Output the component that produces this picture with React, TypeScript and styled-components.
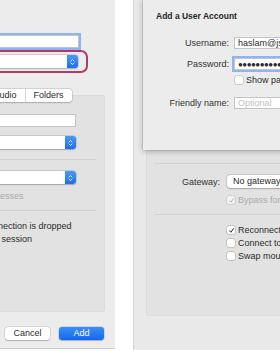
import styled, { createGlobalStyle } from 'styled-components';

const GlobalStyle = createGlobalStyle`
  html, body {
    margin: 0;
    padding: 0;
    background: #ffffff;
  }
  body {
    font-family: 'Liberation Sans', Arial, sans-serif;
    font-size: 9px;
    color: #2b2b2b;
  }
  * {
    box-sizing: border-box;
  }
`;

const Page = styled.div`
  display: flex;
  width: 280px;
  height: 351px;
  overflow: hidden;
  background: #ffffff;
`;

const LeftWindow = styled.div`
  flex-shrink: 0;
  display: flex;
  justify-content: flex-end;
  width: 115px;
  height: 349px;
  overflow: hidden;
  background: #ececec;
  border-bottom: 1px solid #c9c9c9;
`;

const WindowGap = styled.div`
  flex-shrink: 0;
  width: 18px;
`;

const RightWindow = styled.div`
  position: relative;
  flex-shrink: 0;
  display: flex;
  width: 147px;
  height: 350px;
  overflow: hidden;
  background: #e9e9e9;
  border-left: 1px solid #d4d4d4;
`;

const Dialog = styled.div<{ $shift: number }>`
  flex-shrink: 0;
  display: flex;
  flex-direction: column;
  width: 303px;
  padding-top: ${({ $shift }) => 35 + $shift}px;
`;

// the part of the dialog that a sheet may cover
const CoveredPart = styled.div<{ $covered: boolean }>`
  display: flex;
  flex-direction: column;
  visibility: ${({ $covered }) => ($covered ? 'hidden' : 'visible')};
`;

const Row = styled.div<{ $gap?: number }>`
  display: flex;
  align-items: center;
  margin-top: ${({ $gap }) => $gap ?? 0}px;
`;

const Label = styled.div<{ $width: number }>`
  flex-shrink: 0;
  width: ${({ $width }) => $width}px;
  margin-right: 7px;
  text-align: right;
  white-space: nowrap;
  color: #333333;
`;

const TextField = styled.div<{ $width: number; $focused?: boolean; $height?: number }>`
  flex-shrink: 0;
  width: ${({ $width }) => $width}px;
  height: ${({ $height }) => $height ?? 13}px;
  padding: 0 3px;
  display: flex;
  align-items: center;
  white-space: nowrap;
  overflow: hidden;
  background: #ffffff;
  border: 0.5px solid #c4c4c4;
  box-shadow: ${({ $focused }) => ($focused ? '0 0 0 2px #8fb4f3' : 'none')};
  color: #2b2b2b;
`;

const Placeholder = styled.span`
  color: #c2c2c2;
`;

const Dots = styled.span`
  letter-spacing: -0.5px;
  font-size: 8px;
`;

const Popup = styled.div<{ $width: number }>`
  flex-shrink: 0;
  display: flex;
  width: ${({ $width }) => $width}px;
  height: 13px;
  background: #ffffff;
  border-radius: 3px;
  box-shadow: 0 0 0 0.5px rgba(0, 0, 0, 0.18), 0 0.5px 1.5px rgba(0, 0, 0, 0.2);
  overflow: hidden;
`;

const PopupText = styled.div`
  flex: 1;
  padding-left: 6px;
  line-height: 13px;
  white-space: nowrap;
  overflow: hidden;
`;

const Stepper = styled.div`
  flex-shrink: 0;
  display: flex;
  align-items: center;
  justify-content: center;
  width: 11px;
  background: linear-gradient(#4c99fb, #1a6ef2);
`;

const Highlight = styled.div<{ $show: boolean }>`
  display: flex;
  align-items: center;
  justify-content: flex-end;
  margin-top: 2px;
  margin-right: 27px;
  padding: 3px 8px 3px 0;
  border: 2px solid ${({ $show }) => ($show ? '#b23a68' : 'transparent')};
  border-radius: 7px;
`;

const TabBar = styled.div<{ $covered: boolean }>`
  position: relative;
  z-index: 1;
  display: flex;
  align-self: center;
  margin-top: 16px;
  margin-right: 8px;
  height: 13px;
  visibility: ${({ $covered }) => ($covered ? 'hidden' : 'visible')};
  background: #ffffff;
  border-radius: 3px;
  box-shadow: 0 0 0 0.5px rgba(0, 0, 0, 0.16), 0 0.5px 1.5px rgba(0, 0, 0, 0.18);
`;

const Tab = styled.div`
  padding: 0 8px;
  line-height: 13px;
  white-space: nowrap;
  color: #2b2b2b;

  & + & {
    border-left: 1px solid #d6d6d6;
  }
`;

const Panel = styled.div`
  display: flex;
  flex-direction: column;
  height: 217px;
  margin: -7px 10px 0 12px;
  padding-top: 19px;
  background: #e2e2e2;
  border-radius: 3px;
  box-shadow: inset 0 0 0 0.5px rgba(0, 0, 0, 0.05);
`;

const Separator = styled.div<{ $gap: number }>`
  height: 1px;
  margin: ${({ $gap }) => $gap}px 9px 0 9px;
  background: #d2d2d2;
`;

const CheckRow = styled.div<{ $gap: number; $dim?: boolean }>`
  display: flex;
  align-items: center;
  height: 10px;
  margin-top: ${({ $gap }) => $gap}px;
  padding-left: 81px;
  white-space: nowrap;
  color: ${({ $dim }) => ($dim ? '#ababab' : '#2b2b2b')};
`;

const Box = styled.div<{ $dim?: boolean }>`
  flex-shrink: 0;
  display: flex;
  align-items: center;
  justify-content: center;
  width: 8px;
  height: 8px;
  margin-right: 3px;
  background: #ffffff;
  border-radius: 2px;
  box-shadow: 0 0 0 0.5px rgba(0, 0, 0, 0.25);
  opacity: ${({ $dim }) => ($dim ? 0.6 : 1)};
`;

const Footer = styled.div`
  display: flex;
  justify-content: flex-end;
  gap: 9px;
  margin-top: 15px;
  padding-right: 11px;
`;

const Button = styled.div<{ $primary?: boolean }>`
  width: 45px;
  height: 13px;
  line-height: 13px;
  text-align: center;
  border-radius: 3px;
  color: ${({ $primary }) => ($primary ? '#ffffff' : '#2b2b2b')};
  background: ${({ $primary }) => ($primary ? 'linear-gradient(#3b8ef8, #1468ee)' : '#ffffff')};
  box-shadow: 0 0 0 0.5px rgba(0, 0, 0, 0.15), 0 0.5px 1px rgba(0, 0, 0, 0.2);
`;

const Sheet = styled.div`
  position: absolute;
  top: 0;
  left: 9px;
  z-index: 2;
  display: flex;
  flex-direction: column;
  width: 300px;
  height: 150px;
  padding: 11px 0 0 13px;
  background: #ececec;
  box-shadow: 0 1px 6px rgba(0, 0, 0, 0.28), 0 0 0 0.5px rgba(0, 0, 0, 0.15);
`;

const SheetTitle = styled.div`
  font-size: 8.5px;
  font-weight: bold;
  line-height: 10px;
  color: #262626;
`;

const SheetRow = styled.div<{ $gap: number }>`
  display: flex;
  align-items: center;
  margin-top: ${({ $gap }) => $gap}px;
`;

const SheetLabel = styled.div`
  flex-shrink: 0;
  width: 73px;
  margin-right: 5px;
  text-align: right;
  white-space: nowrap;
  color: #333333;
`;

const SheetCheck = styled.div`
  display: flex;
  align-items: center;
  height: 8px;
  margin-top: 6px;
  padding-left: 79px;
  white-space: nowrap;
`;

const Chevrons = () => (
  <svg width="5" height="8" viewBox="0 0 5 8" fill="none" stroke="#ffffff" strokeWidth="0.9" strokeLinecap="round" strokeLinejoin="round">
    <path d="M1 3 L2.5 1.5 L4 3" />
    <path d="M1 5 L2.5 6.5 L4 5" />
  </svg>
);

const Check = ({ color }: { color: string }) => (
  <svg width="7" height="7" viewBox="0 0 7 7" fill="none" stroke={color} strokeWidth="1" strokeLinecap="round" strokeLinejoin="round">
    <path d="M1.5 3.8 L2.9 5.3 L5.6 1.6" />
  </svg>
);

const AddPcDialog = ({ shift, highlight, covered }: { shift: number; highlight: boolean; covered: boolean }) => (
  <Dialog $shift={shift}>
    <CoveredPart $covered={covered}>
      <Row>
        <Label $width={86}>PC name:</Label>
        <TextField $width={174} $focused />
      </Row>
      <Highlight $show={highlight}>
        <Label $width={78}>User account:</Label>
        <Popup $width={171}>
          <PopupText>Ask when required</PopupText>
          <Stepper>
            <Chevrons />
          </Stepper>
        </Popup>
      </Highlight>
    </CoveredPart>
    <TabBar $covered={covered}>
      <Tab>General</Tab>
      <Tab>Display</Tab>
      <Tab>Devices &amp; Audio</Tab>
      <Tab>Folders</Tab>
    </TabBar>
    <Panel>
      <CoveredPart $covered={covered}>
        <Row>
          <Label $width={74}>Friendly name:</Label>
          <TextField $width={171}>
            <Placeholder>Optional</Placeholder>
          </TextField>
        </Row>
        <Row $gap={9}>
          <Label $width={74}>Group:</Label>
          <Popup $width={171}>
            <PopupText>Saved PCs</PopupText>
            <Stepper>
              <Chevrons />
            </Stepper>
          </Popup>
        </Row>
      </CoveredPart>
      <Separator $gap={10} />
      <Row $gap={11}>
        <Label $width={74}>Gateway:</Label>
        <Popup $width={171}>
          <PopupText>No gateway</PopupText>
          <Stepper>
            <Chevrons />
          </Stepper>
        </Popup>
      </Row>
      <CheckRow $gap={7} $dim>
        <Box $dim>
          <Check color="#9a9a9a" />
        </Box>
        Bypass for local addresses
      </CheckRow>
      <Separator $gap={9} />
      <CheckRow $gap={10}>
        <Box>
          <Check color="#2b2b2b" />
        </Box>
        Reconnect if the connection is dropped
      </CheckRow>
      <CheckRow $gap={3}>
        <Box />
        Connect to an admin session
      </CheckRow>
      <CheckRow $gap={3}>
        <Box />
        Swap mouse buttons
      </CheckRow>
    </Panel>
    <Footer>
      <Button>Cancel</Button>
      <Button $primary>Add</Button>
    </Footer>
  </Dialog>
);

const AddUserSheet = () => (
  <Sheet>
    <SheetTitle>Add a User Account</SheetTitle>
    <SheetRow $gap={16}>
      <SheetLabel>Username:</SheetLabel>
      <TextField $width={180} $height={12}>
        haslam@jsmithco.com
      </TextField>
    </SheetRow>
    <SheetRow $gap={9}>
      <SheetLabel>Password:</SheetLabel>
      <TextField $width={180} $height={12} $focused>
        <Dots>●●●●●●●●●●●●</Dots>
      </TextField>
    </SheetRow>
    <SheetCheck>
      <Box />
      Show password
    </SheetCheck>
    <SheetRow $gap={13}>
      <SheetLabel>Friendly name:</SheetLabel>
      <TextField $width={180} $height={12}>
        <Placeholder>Optional</Placeholder>
      </TextField>
    </SheetRow>
  </Sheet>
);

export default function App() {
  return (
    <>
      <GlobalStyle />
      <Page>
        <LeftWindow>
          <AddPcDialog shift={0} highlight covered={false} />
        </LeftWindow>
        <WindowGap />
        <RightWindow>
          <AddPcDialog shift={4} highlight={false} covered />
          <AddUserSheet />
        </RightWindow>
      </Page>
    </>
  );
}
